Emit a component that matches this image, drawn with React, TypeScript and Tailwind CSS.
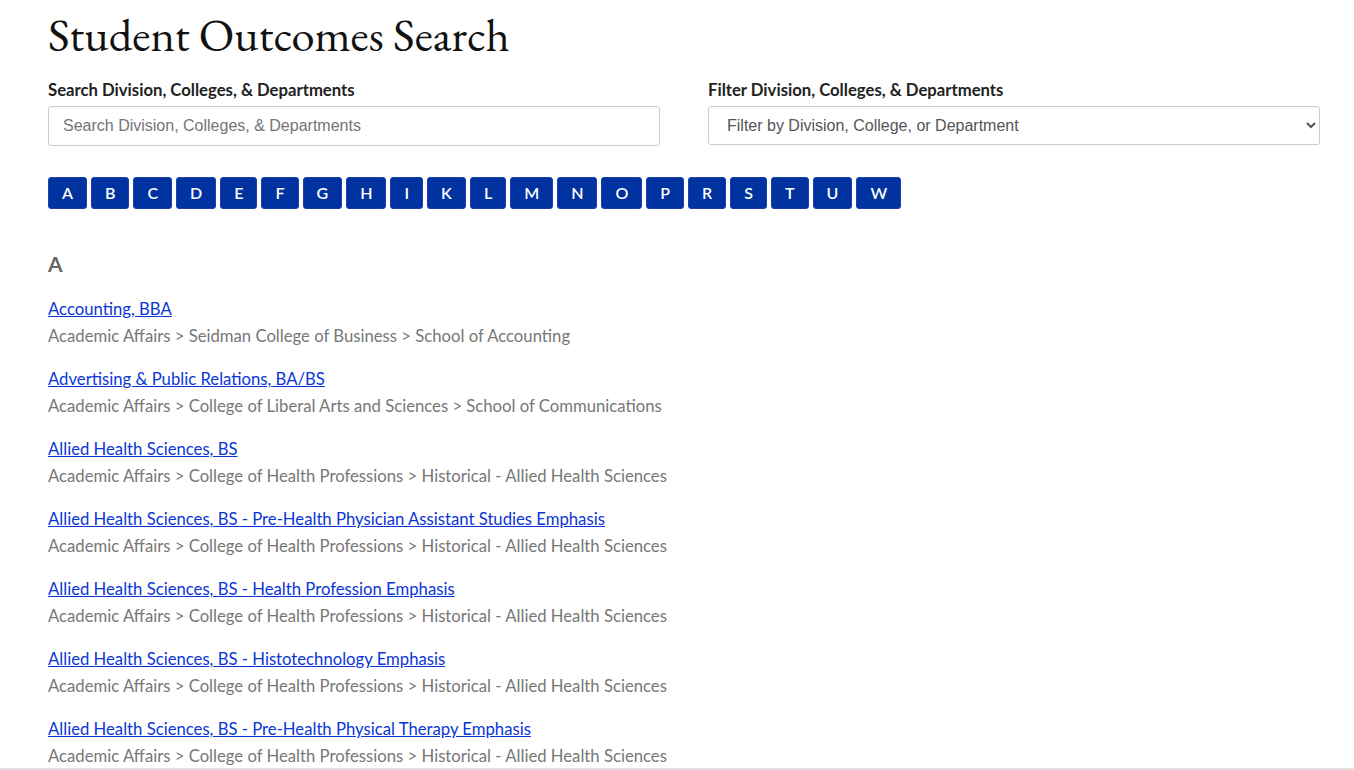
import { useState } from "react";

const letters = ["A", "B", "C", "D", "E", "F", "G", "H", "I", "K", "L", "M", "N", "O", "P", "R", "S", "T", "U", "W"];

interface Program {
  name: string;
  path: string;
}

const programs: Program[] = [
  { name: "Accounting, BBA", path: "Academic Affairs > Seidman College of Business > School of Accounting" },
  { name: "Advertising & Public Relations, BA/BS", path: "Academic Affairs > College of Liberal Arts and Sciences > School of Communications" },
  { name: "Allied Health Sciences, BS", path: "Academic Affairs > College of Health Professions > Historical - Allied Health Sciences" },
  { name: "Allied Health Sciences, BS - Pre-Health Physician Assistant Studies Emphasis", path: "Academic Affairs > College of Health Professions > Historical - Allied Health Sciences" },
  { name: "Allied Health Sciences, BS - Health Profession Emphasis", path: "Academic Affairs > College of Health Professions > Historical - Allied Health Sciences" },
  { name: "Allied Health Sciences, BS - Histotechnology Emphasis", path: "Academic Affairs > College of Health Professions > Historical - Allied Health Sciences" },
  { name: "Allied Health Sciences, BS - Pre-Health Physical Therapy Emphasis", path: "Academic Affairs > College of Health Professions > Historical - Allied Health Sciences" },
];

export default function App() {
  const [query, setQuery] = useState("");

  return (
    <div className="min-h-screen bg-white font-['Lato','Noto_Sans',sans-serif] text-[#333]">
      <div className="pl-[48px] pr-[34px]">
        <h1 className="pt-[8px] font-['EB_Garamond','Liberation_Serif',serif] text-[46.5px] leading-[54px] text-[#111]">
          Student Outcomes Search
        </h1>

        {/* Search + filter */}
        <div className="mt-[19px] grid grid-cols-2 gap-[48px]">
          <div>
            <label className="block text-[16.7px] font-bold leading-[19px] text-[#222]">
              Search Division, Colleges, &amp; Departments
            </label>
            <input
              value={query}
              onChange={(e) => setQuery(e.target.value)}
              placeholder="Search Division, Colleges, & Departments"
              className="mt-[6px] h-[40px] w-full rounded-[3px] border border-[#ccc] px-[14px] font-['Liberation_Sans',Arial,sans-serif] text-[16px] text-[#555] placeholder:text-[#757575] outline-none"
            />
          </div>
          <div>
            <label className="block text-[16.7px] font-bold leading-[19px] text-[#222]">
              Filter Division, Colleges, &amp; Departments
            </label>
            <select className="mt-[6px] h-[39px] w-full rounded-[3px] border border-[#ccc] bg-white px-[14px] font-['Liberation_Sans',Arial,sans-serif] text-[16px] text-[#555] outline-none">
              <option>Filter by Division, College, or Department</option>
            </select>
          </div>
        </div>

        {/* Letter jump bar */}
        <div className="mt-[31px] flex gap-[4px]">
          {letters.map((l) => (
            <button
              key={l}
              className="h-[32px] rounded-[3px] border border-[#1b3fa8] bg-[#0033a0] px-[13px] text-[16px] font-semibold text-white"
            >
              {l}
            </button>
          ))}
        </div>

        <h2 className="mt-[41px] text-[21px] font-bold leading-[28px] text-[#666]">A</h2>

        <div className="mt-[18px] flex flex-col gap-[16px]">
          {programs.map((p) => (
            <div key={p.name}>
              <a href="#" className="block text-[16.7px] leading-[27px] text-[#0a36d6] underline">
                {p.name}
              </a>
              <div className="text-[16.7px] leading-[27px] text-[#777]">{p.path}</div>
            </div>
          ))}
        </div>
      </div>
      <div className="fixed bottom-0 left-0 right-0 h-[2px] bg-[#e2e2e2]" />
    </div>
  );
}
